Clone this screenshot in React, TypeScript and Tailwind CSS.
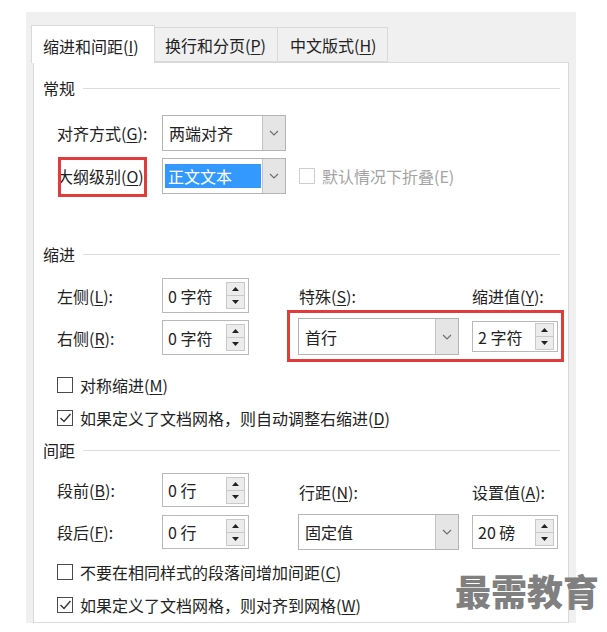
import type { ReactNode } from 'react';

function Key({ label, k, colon = false }: { label: string; k: string; colon?: boolean }) {
  return (
    <span>
      {label}(<span className="underline underline-offset-2">{k}</span>){colon ? ':' : ''}
    </span>
  );
}

function Chevron() {
  return (
    <svg width="10" height="6" viewBox="0 0 10 6">
      <polyline points="1,1 5,5 9,1" fill="none" stroke="#707070" strokeWidth="1.2" />
    </svg>
  );
}

function Select({
  value,
  className,
  selected = false,
}: {
  value: string;
  className: string;
  selected?: boolean;
}) {
  return (
    <div className={`flex border border-[#b4b4b4] bg-white ${className}`}>
      {selected ? (
        <div className="flex flex-1 items-center pl-[2px] pr-px">
          <span className="flex h-[24px] w-full items-center bg-[#3399ff] pl-[3px] text-white">{value}</span>
        </div>
      ) : (
        <div className="flex flex-1 items-center pl-[6px]">{value}</div>
      )}
      <div className="flex w-[23px] items-center justify-center border-l border-[#c4c4c4] bg-[#e5e5e5]">
        <Chevron />
      </div>
    </div>
  );
}

function Spin({ value, className }: { value: string; className: string }) {
  return (
    <div className={`flex items-center justify-between border border-[#b8b8b8] bg-white pl-[5px] pr-[3px] ${className}`}>
      <span>{value}</span>
      <div className="flex w-[19px] flex-col">
        <div className="flex h-[14px] items-center justify-center border border-[#c9c9c9] bg-[#ececec]">
          <svg width="7" height="4" viewBox="0 0 7 4">
            <polygon points="0,4 3.5,0 7,4" fill="#222" />
          </svg>
        </div>
        <div className="-mt-px flex h-[14px] items-center justify-center border border-[#c9c9c9] bg-[#ececec]">
          <svg width="7" height="4" viewBox="0 0 7 4">
            <polygon points="0,0 3.5,4 7,0" fill="#222" />
          </svg>
        </div>
      </div>
    </div>
  );
}

function Section({ title, className }: { title: string; className: string }) {
  return (
    <div className={`flex h-[24px] items-center pl-[9px] pr-[8px] ${className}`}>
      <span>{title}</span>
      <div className="ml-[8px] h-px flex-1 bg-[#dcdcdc]" />
    </div>
  );
}

function Check({ checked = false, className, children }: { checked?: boolean; className: string; children: ReactNode }) {
  return (
    <div className={`flex h-[20px] items-center pl-[23px] ${className}`}>
      <span className="flex h-[16px] w-[16px] items-center justify-center border border-[#4a4a4a] bg-white">
        {checked && (
          <svg width="13" height="12" viewBox="0 0 13 12">
            <polyline points="1.5,6 5,9.5 11.5,2" fill="none" stroke="#333" strokeWidth="1.4" />
          </svg>
        )}
      </span>
      <span className="ml-[7px]">{children}</span>
    </div>
  );
}

export default function App() {
  return (
    <div className="relative h-[632px] w-[607px] overflow-hidden bg-white pt-[12px] font-['Microsoft_YaHei','Noto_Sans_CJK_SC',sans-serif] text-[16px] leading-none text-[#222]">
      <div className="ml-[26px] flex h-[611px] w-[550px] flex-col bg-[#f0f0f0]">
        {/* Tabs */}
        <div className="flex h-[50px] items-end pl-[5px]">
          <div className="relative z-10 -mb-px flex h-[38px] w-[124px] items-center border border-b-0 border-[#d9d9d9] bg-white pl-[11px] pt-[2px]">
            <Key label="缩进和间距" k="I" />
          </div>
          <div className="flex h-[35px] w-[123px] items-center border border-l-0 border-[#d9d9d9] bg-[#f0f0f0] pl-[10px]">
            <Key label="换行和分页" k="P" />
          </div>
          <div className="flex h-[35px] w-[110px] items-center border border-l-0 border-[#d9d9d9] bg-[#f0f0f0] pl-[12px]">
            <Key label="中文版式" k="H" />
          </div>
        </div>

        {/* Page */}
        <div className="mx-[7px] flex-1 border border-[#d9d9d9] bg-white">
          <Section title="常规" className="mt-[13px]" />

          <div className="mt-[15px] flex h-[36px] items-center pl-[23px]">
            <div className="w-[105px]">
              <Key label="对齐方式" k="G" colon />
            </div>
            <Select value="两端对齐" className="h-[36px] w-[124px]" />
          </div>

          <div className="relative mt-[7px] flex h-[36px] items-center pl-[23px]">
            <div className="w-[105px]">
              <Key label="大纲级别" k="O" colon />
            </div>
            <Select value="正文文本" selected className="h-[36px] w-[124px]" />
            <span className="ml-[13px] h-[16px] w-[16px] border border-[#cdcdcd] bg-white" />
            <span className="ml-[7px] text-[#a3a3a3]">默认情况下折叠(E)</span>
            <div className="absolute left-[24px] top-[-1px] h-[40px] w-[89px] border-[3px] border-[#e23b3b]" />
          </div>

          <Section title="缩进" className="mt-[48px]" />

          <div className="relative mt-[12px] flex pl-[23px]">
            <div className="flex flex-col gap-[7px]">
              <div className="flex h-[35px] items-center">
                <div className="w-[105px]">
                  <Key label="左侧" k="L" colon />
                </div>
                <Spin value="0 字符" className="h-[35px] w-[87px]" />
              </div>
              <div className="flex h-[35px] items-center">
                <div className="w-[105px]">
                  <Key label="右侧" k="R" colon />
                </div>
                <Spin value="0 字符" className="h-[35px] w-[87px]" />
              </div>
            </div>
            <div className="ml-[49px] flex flex-col">
              <div className="mt-[8px] flex h-[20px] items-center pl-px">
                <div className="w-[173px]">
                  <Key label="特殊" k="S" colon />
                </div>
                <Key label="缩进值" k="Y" colon />
              </div>
              <div className="mt-[12px] flex items-center gap-[13px]">
                <Select value="首行" className="h-[37px] w-[161px]" />
                <Spin value="2 字符" className="h-[31px] w-[86px]" />
              </div>
            </div>
            <div className="absolute left-[253px] top-[32px] h-[52px] w-[277px] border-[3px] border-[#e23b3b]" />
          </div>

          <Check className="mt-[20px]">
            <Key label="对称缩进" k="M" />
          </Check>
          <Check checked className="mt-[13px]">
            <Key label="如果定义了文档网格，则自动调整右缩进" k="D" />
          </Check>

          <Section title="间距" className="mt-[10px]" />

          <div className="mt-[11px] flex pl-[23px]">
            <div className="flex flex-col gap-[8px]">
              <div className="flex h-[34px] items-center">
                <div className="w-[105px]">
                  <Key label="段前" k="B" colon />
                </div>
                <Spin value="0 行" className="h-[34px] w-[87px]" />
              </div>
              <div className="flex h-[34px] items-center">
                <div className="w-[105px]">
                  <Key label="段后" k="F" colon />
                </div>
                <Spin value="0 行" className="h-[34px] w-[87px]" />
              </div>
            </div>
            <div className="ml-[49px] flex flex-col">
              <div className="mt-[9px] flex h-[20px] items-center pl-px">
                <div className="w-[173px]">
                  <Key label="行距" k="N" colon />
                </div>
                <Key label="设置值" k="A" colon />
              </div>
              <div className="mt-[12px] flex items-center gap-[13px]">
                <Select value="固定值" className="h-[36px] w-[161px]" />
                <Spin value="20 磅" className="h-[34px] w-[86px]" />
              </div>
            </div>
          </div>

          <Check className="mt-[12px]">
            <Key label="不要在相同样式的段落间增加间距" k="C" />
          </Check>
          <Check checked className="mt-[13px]">
            <Key label="如果定义了文档网格，则对齐到网格" k="W" />
          </Check>
        </div>
      </div>

      <div className="absolute left-[455px] top-[572px] text-[36px] font-black leading-none text-[#808080]">最需教育</div>
    </div>
  );
}
